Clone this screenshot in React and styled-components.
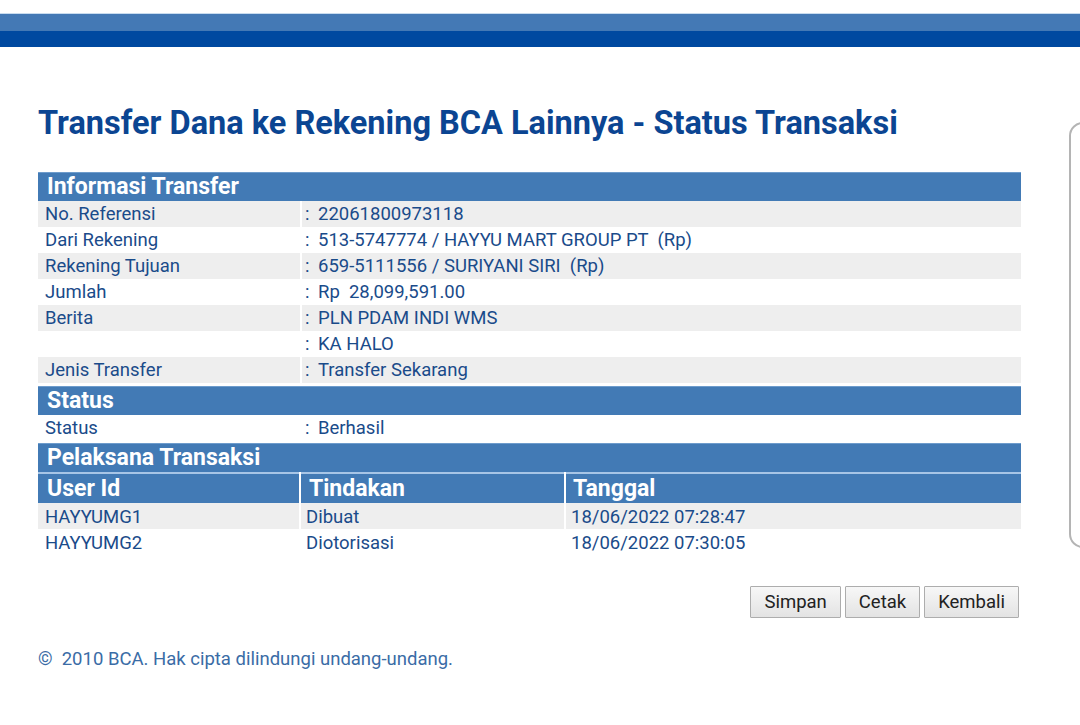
import React from "react";
import styled, { createGlobalStyle } from "styled-components";

const Global = createGlobalStyle`
  html, body { margin: 0; padding: 0; background: #fff; }
  body { font-family: Roboto, "Noto Sans", "Liberation Sans", sans-serif; }
`;

const Page = styled.div`
  position: relative;
  width: 1080px;
  height: 725px;
  overflow: hidden;
  background: #fff;
`;

const TopBar = styled.div`
  margin-top: 13px;
  border-top: 1px solid #c9dcef;
  display: flex;
  flex-direction: column;
`;

const Band = styled.div`
  height: ${(p) => p.$h}px;
  background: ${(p) => p.$c};
`;

const Content = styled.div`
  padding: 0 59px 0 38px;
  display: flex;
  flex-direction: column;
`;

const Title = styled.h1`
  margin: 56px 0 0 0;
  font-size: 32.5px;
  line-height: 40px;
  font-weight: 700;
  color: #0b4592;
  white-space: nowrap;
`;

const Block = styled.div`
  margin-top: ${(p) => p.$mt || 0}px;
  display: flex;
  flex-direction: column;
`;

const SectionHead = styled.div`
  height: 28px;
  background: #427ab5;
  color: #fff;
  font-weight: 700;
  font-size: 23px;
  line-height: 28px;
  padding-left: 9px;
  border-top: 1px solid #6e9ccc;
`;

const Row = styled.div`
  display: grid;
  grid-template-columns: 262px 1fr;
  column-gap: 2px;
  height: 26px;
`;

const Cell = styled.div`
  height: 26px;
  overflow: hidden;
  background: ${(p) => (p.$alt ? "#eeeeee" : "#fff")};
  color: #1a4b8a;
  font-size: 18.5px;
  line-height: 27px;
  padding-left: ${(p) => p.$pl}px;
  white-space: pre;
`;

const Colon = styled.span`
  display: inline-block;
  width: 13px;
`;

const TxGrid = styled.div`
  display: grid;
  grid-template-columns: 261px 263px 1fr;
  column-gap: 2px;
`;

const ColHead = styled.div`
  height: 29px;
  margin-top: 2px;
  background: #427ab5;
  color: #fff;
  font-weight: 700;
  font-size: 23px;
  line-height: 29px;
  padding-left: ${(p) => p.$pl}px;
  box-shadow: 0 -2px 0 #a7c5e6;
`;

const TxCell = styled.div`
  height: 26px;
  overflow: hidden;
  background: ${(p) => (p.$alt ? "#eeeeee" : "#fff")};
  color: #1a4b8a;
  font-size: 18.5px;
  line-height: 28px;
  padding-left: ${(p) => p.$pl}px;
`;

const Actions = styled.div`
  display: flex;
  justify-content: flex-end;
  gap: 4px;
  margin-top: 31px;
  padding-right: 2px;
`;

const Button = styled.button`
  height: 32px;
  padding: 0 ${(p) => p.$px}px;
  font-family: Roboto, "Noto Sans", "Liberation Sans", sans-serif;
  font-size: 18.5px;
  color: #222;
  background: linear-gradient(#f7f7f7, #e3e3e3);
  border: 1px solid #adadad;
  border-radius: 1px;
`;

const Footer = styled.div`
  margin-top: 30px;
  font-size: 18.5px;
  color: #3a6ca6;
  white-space: pre;
`;

const EdgePanel = styled.div`
  position: absolute;
  left: 1069px;
  top: 122px;
  width: 60px;
  height: 426px;
  border: 2px solid #b4b4b4;
  border-radius: 14px;
  box-sizing: border-box;
`;

const info = [
  ["No. Referensi", "22061800973118"],
  ["Dari Rekening", "513-5747774 / HAYYU MART GROUP PT  (Rp)"],
  ["Rekening Tujuan", "659-5111556 / SURIYANI SIRI  (Rp)"],
  ["Jumlah", "Rp  28,099,591.00"],
  ["Berita", "PLN PDAM INDI WMS"],
  ["", "KA HALO"],
  ["Jenis Transfer", "Transfer Sekarang"],
];

const tx = [
  ["HAYYUMG1", "Dibuat", "18/06/2022 07:28:47"],
  ["HAYYUMG2", "Diotorisasi", "18/06/2022 07:30:05"],
];

function InfoRow({ label, value, alt }) {
  return (
    <Row>
      <Cell $alt={alt} $pl={7}>{label}</Cell>
      <Cell $alt={alt} $pl={3}>
        <Colon>:</Colon>
        {value}
      </Cell>
    </Row>
  );
}

export default function App() {
  return (
    <Page>
      <Global />
      <TopBar>
        <Band $h={17} $c="#4479b5" />
        <Band $h={16} $c="#0049a0" />
      </TopBar>
      <Content>
        <Title>Transfer Dana ke Rekening BCA Lainnya - Status Transaksi</Title>
        <Block $mt={29}>
          <SectionHead>Informasi Transfer</SectionHead>
          {info.map(([l, v], i) => (
            <InfoRow key={i} label={l} value={v} alt={i % 2 === 0} />
          ))}
        </Block>
        <Block $mt={3}>
          <SectionHead>Status</SectionHead>
          <InfoRow label="Status" value="Berhasil" alt={false} />
        </Block>
        <Block $mt={2}>
          <SectionHead>Pelaksana Transaksi</SectionHead>
          <TxGrid>
            <ColHead $pl={9}>User Id</ColHead>
            <ColHead $pl={8}>Tindakan</ColHead>
            <ColHead $pl={7}>Tanggal</ColHead>
            {tx.map((r, i) =>
              r.map((c, j) => (
                <TxCell key={`${i}-${j}`} $alt={i % 2 === 0} $pl={j === 0 ? 7 : 5}>
                  {c}
                </TxCell>
              ))
            )}
          </TxGrid>
        </Block>
        <Actions>
          <Button $px={13}>Simpan</Button>
          <Button $px={13}>Cetak</Button>
          <Button $px={13}>Kembali</Button>
        </Actions>
        <Footer>{"©  2010 BCA. Hak cipta dilindungi undang-undang."}</Footer>
      </Content>
      <EdgePanel />
    </Page>
  );
}
